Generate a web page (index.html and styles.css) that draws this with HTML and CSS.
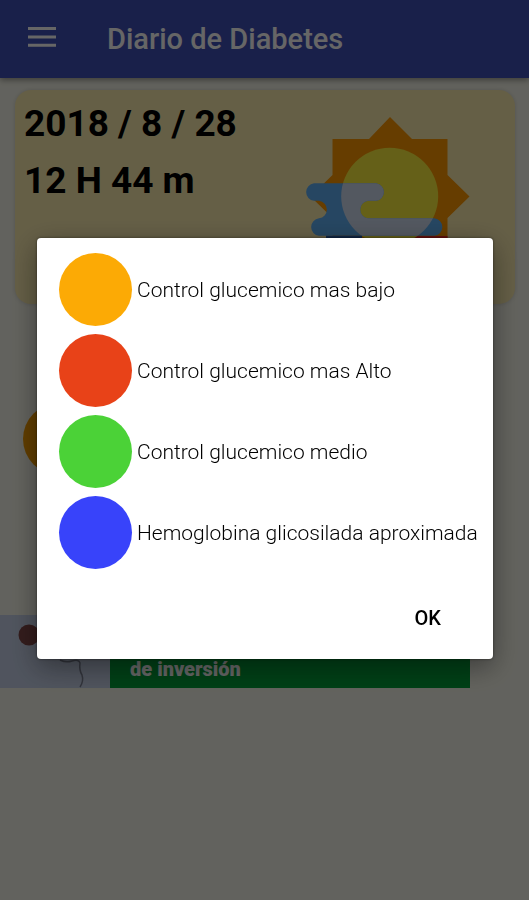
FILE: index.html
```html
<!DOCTYPE html>
<html lang="es">
<head>
<meta charset="utf-8">
<meta name="viewport" content="width=device-width, initial-scale=1">
<title>Diario de Diabetes</title>
<link rel="stylesheet" href="styles.css">
</head>
<body>
<div class="app">
  <header class="toolbar">
    <button class="menu" aria-label="Menú">
      <svg width="28" height="20" viewBox="0 0 28 20"><path d="M0 1.6h28M0 10h28M0 18.2h28" stroke="currentColor" stroke-width="3"/></svg>
    </button>
    <h1 class="title">Diario de Diabetes</h1>
  </header>
  <main class="content">
    <section class="card">
      <div class="moment">
        <p>2018 / 8 / 28</p>
        <p>12 H 44 m</p>
      </div>
      <svg class="weather" viewBox="300 110 176 150" aria-hidden="true">
        <defs><clipPath id="disc"><circle cx="389.7" cy="196.3" r="48.5"/></clipPath></defs>
        <path fill="#ff9800" d="M390 117l22 22h35.500v36l22 21.500-22 21.500v36h-115v-36l-22-21.500 22-21.500v-36h36.500z"/>
        <path fill="#ff2a20" d="M410 236h37.500v20h-37.500z"/>
        <circle fill="#fdf03c" cx="389.700" cy="196.300" r="48.500"/>
        <path fill="#60b0f4" d="M314 183.300H376a8.800 8.800 0 0 1 0 17.500H368a8.800 8.800 0 0 0 0 17.500H434.500a8.800 8.800 0 0 1 0 17.500H319a8.800 8.800 0 0 1 0-17.500a8.800 8.800 0 0 0 0-17.500H314a8.800 8.800 0 0 1 0-17.500z"/>
        <path fill="#d0dcf0" clip-path="url(#disc)" d="M315 183.300H376a8.800 8.800 0 0 1 0 17.500H368a8.800 8.800 0 0 0 0 17.500H434.500a8.800 8.800 0 0 1 0 17.500H319z"/>
        <path fill="#2860b0" d="M326 235.800h36v18h-36z"/>
      </svg>
    </section>
    <div class="marker"></div>
    <aside class="banner">
      <svg class="figure" viewBox="0 0 110 73" aria-hidden="true">
        <circle cx="29" cy="20" r="10.500" fill="#804848"/>
        <path d="M60 45q6 3 12 1q7-2 8 2q-1 7 2 12q2 6-2 12" fill="none" stroke="#7c8294" stroke-width="1.500"/>
      </svg>
      <p class="offer">de inversión</p>
    </aside>
  </main>
</div>
<div class="scrim">
  <div class="dialog" role="dialog" aria-modal="true" aria-label="Leyenda de colores">
    <ul class="legend">
      <li><span class="dot low"></span>Control glucemico mas bajo</li>
      <li><span class="dot high"></span>Control glucemico mas Alto</li>
      <li><span class="dot mean"></span>Control glucemico medio</li>
      <li><span class="dot hemo"></span>Hemoglobina glicosilada aproximada</li>
    </ul>
    <div class="actions"><button class="ok">OK</button></div>
  </div>
</div>
</body>
</html>
```
FILE: styles.css
```css
* {
  box-sizing: border-box;
}

body {
  margin: 0;
  background: #f6f6ea;
  font-family: Roboto, "Liberation Sans", sans-serif;
  color: #000;
}

h1, p, ul {
  margin: 0;
  padding: 0;
}

button {
  border: 0;
  background: none;
  font: inherit;
  color: inherit;
}

.app {
  min-height: 100vh;
}

.toolbar {
  display: flex;
  align-items: center;
  gap: 51px;
  height: 78px;
  padding: 0 28px;
  background: #3f50b8;
  color: #fff;
  box-shadow: 0 2px 6px rgba(0, 0, 0, 0.4);
}

.menu {
  display: flex;
  padding: 0 0 4px;
}

.title {
  font-size: 29px;
  font-weight: 500;
}

.content {
  padding-top: 12px;
}

.card {
  display: flex;
  justify-content: space-between;
  align-items: flex-start;
  min-height: 214px;
  margin: 0 14px 0 15px;
  padding: 5px 39px 0 9px;
  border-radius: 16px;
  background: #fdedb0;
  box-shadow: 0 0 4px rgba(0, 0, 0, 0.15);
}

.moment {
  font-size: 37px;
  font-weight: 700;
  line-height: 57px;
}

.weather {
  width: 176px;
  height: 150px;
  margin-top: 15px;
}

.marker {
  width: 72px;
  height: 72px;
  margin: 99px 0 0 23px;
  border-radius: 50%;
  background: #f09a00;
}

.banner {
  display: flex;
  height: 73px;
  margin: 140px 59px 0 0;
  background: #00a038;
}

.figure {
  flex: none;
  width: 110px;
  height: 73px;
  background: #c8d3ea;
}

.offer {
  align-self: flex-end;
  padding: 0 20px 8px;
  font-size: 20px;
  font-weight: 900;
  line-height: 22px;
  color: #fff;
}

.scrim {
  position: fixed;
  inset: 0;
  display: flex;
  align-items: center;
  justify-content: center;
  padding: 0 36px 3px 37px;
  background: rgba(0, 0, 0, 0.6);
}

.dialog {
  width: 100%;
  padding: 15px 12px 17px 22px;
  border-radius: 4px;
  background: #fff;
  box-shadow: 0 0 3px rgba(0, 0, 0, 0.5), 0 8px 28px rgba(0, 0, 0, 0.4);
}

.legend {
  display: grid;
  gap: 8px;
  list-style: none;
  font-size: 21px;
  font-weight: 350;
}

.legend li {
  display: flex;
  align-items: center;
  gap: 5px;
  white-space: nowrap;
}

.dot {
  flex: none;
  width: 73px;
  height: 73px;
  border-radius: 50%;
}

.low { background: #fcaa05; }
.high { background: #e84218; }
.mean { background: #4bd237; }
.hemo { background: #3843fa; }

.actions {
  display: flex;
  justify-content: flex-end;
  padding-top: 25px;
}

.ok {
  height: 48px;
  padding: 0 40px;
  font-size: 20px;
  font-weight: 500;
}
```
